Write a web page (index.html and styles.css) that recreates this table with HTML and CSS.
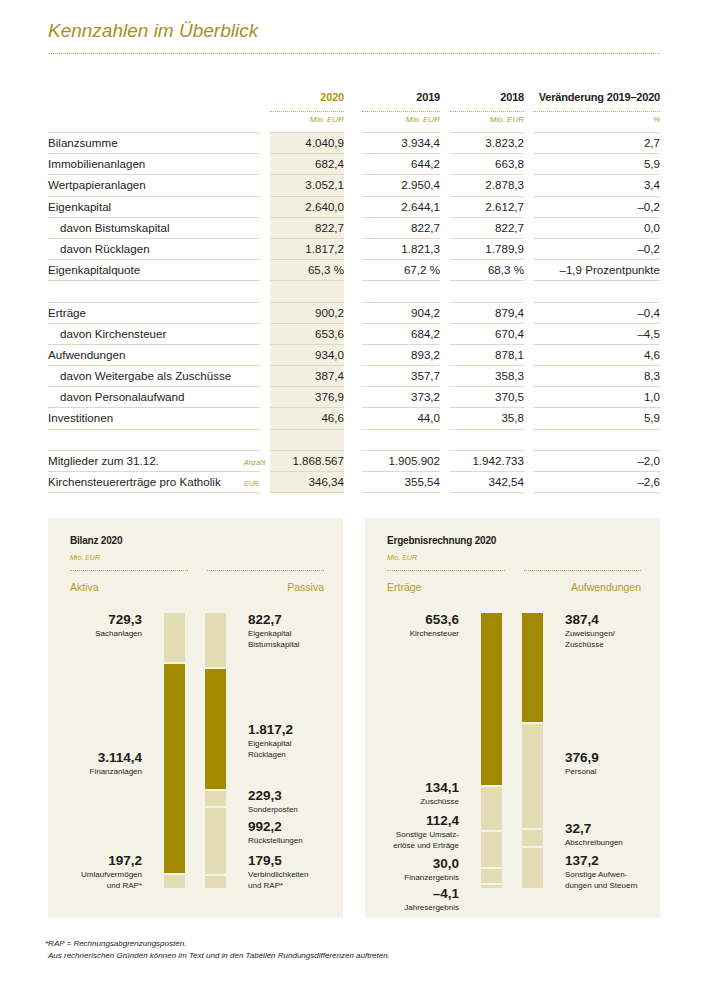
FILE: index.html
```html
<!DOCTYPE html>
<html lang="de">
<head>
<meta charset="utf-8">
<title>Kennzahlen im Überblick</title>
<link rel="stylesheet" href="styles.css">
</head>
<body>
<div class="page">
  <h1 class="title">Kennzahlen im Überblick</h1>

  <div class="table">
    <div class="row head">
      <div class="c lab"></div>
      <div class="c y20 gold">2020</div>
      <div class="c y19">2019</div>
      <div class="c y18">2018</div>
      <div class="c chg">Veränderung 2019–2020</div>
    </div>
    <div class="row units">
      <div class="c lab"></div>
      <div class="c y20">Mio. EUR</div>
      <div class="c y19">Mio. EUR</div>
      <div class="c y18">Mio. EUR</div>
      <div class="c chg">%</div>
    </div>

    <div class="row body"><div class="c lab">Bilanzsumme</div><div class="c y20">4.040,9</div><div class="c y19">3.934,4</div><div class="c y18">3.823,2</div><div class="c chg">2,7</div></div>
    <div class="row body"><div class="c lab">Immobilienanlagen</div><div class="c y20">682,4</div><div class="c y19">644,2</div><div class="c y18">663,8</div><div class="c chg">5,9</div></div>
    <div class="row body"><div class="c lab">Wertpapieranlagen</div><div class="c y20">3.052,1</div><div class="c y19">2.950,4</div><div class="c y18">2.878,3</div><div class="c chg">3,4</div></div>
    <div class="row body"><div class="c lab">Eigenkapital</div><div class="c y20">2.640,0</div><div class="c y19">2.644,1</div><div class="c y18">2.612,7</div><div class="c chg">–0,2</div></div>
    <div class="row body"><div class="c lab sub">davon Bistumskapital</div><div class="c y20">822,7</div><div class="c y19">822,7</div><div class="c y18">822,7</div><div class="c chg">0,0</div></div>
    <div class="row body"><div class="c lab sub">davon Rücklagen</div><div class="c y20">1.817,2</div><div class="c y19">1.821,3</div><div class="c y18">1.789,9</div><div class="c chg">–0,2</div></div>
    <div class="row body"><div class="c lab">Eigenkapitalquote</div><div class="c y20">65,3 %</div><div class="c y19">67,2 %</div><div class="c y18">68,3 %</div><div class="c chg">–1,9 Prozentpunkte</div></div>
    <div class="row body"><div class="c lab"></div><div class="c y20"></div><div class="c y19"></div><div class="c y18"></div><div class="c chg"></div></div>
    <div class="row body"><div class="c lab">Erträge</div><div class="c y20">900,2</div><div class="c y19">904,2</div><div class="c y18">879,4</div><div class="c chg">–0,4</div></div>
    <div class="row body"><div class="c lab sub">davon Kirchensteuer</div><div class="c y20">653,6</div><div class="c y19">684,2</div><div class="c y18">670,4</div><div class="c chg">–4,5</div></div>
    <div class="row body"><div class="c lab">Aufwendungen</div><div class="c y20">934,0</div><div class="c y19">893,2</div><div class="c y18">878,1</div><div class="c chg">4,6</div></div>
    <div class="row body"><div class="c lab sub">davon Weitergabe als Zuschüsse</div><div class="c y20">387,4</div><div class="c y19">357,7</div><div class="c y18">358,3</div><div class="c chg">8,3</div></div>
    <div class="row body"><div class="c lab sub">davon Personalaufwand</div><div class="c y20">376,9</div><div class="c y19">373,2</div><div class="c y18">370,5</div><div class="c chg">1,0</div></div>
    <div class="row body"><div class="c lab">Investitionen</div><div class="c y20">46,6</div><div class="c y19">44,0</div><div class="c y18">35,8</div><div class="c chg">5,9</div></div>
    <div class="row body"><div class="c lab"></div><div class="c y20"></div><div class="c y19"></div><div class="c y18"></div><div class="c chg"></div></div>
    <div class="row body"><div class="c lab"><span class="ltext">Mitglieder zum 31.12.</span><span class="lunit">Anzahl</span></div><div class="c y20">1.868.567</div><div class="c y19">1.905.902</div><div class="c y18">1.942.733</div><div class="c chg">–2,0</div></div>
    <div class="row body"><div class="c lab"><span class="ltext">Kirchensteuererträge pro Katholik</span><span class="lunit">EUR</span></div><div class="c y20">346,34</div><div class="c y19">355,54</div><div class="c y18">342,54</div><div class="c chg">–2,6</div></div>
  </div>

  <div class="charts">
    <div class="panel">
      <div class="ptitle">Bilanz 2020</div>
      <div class="punit">Mio. EUR</div>
      <div class="pdots"><span></span><span></span></div>
      <div class="psides"><span>Aktiva</span><span>Passiva</span></div>
      <div class="chart">
        <div class="lab-left">
          <div class="ann" style="top:0px"><b>729,3</b><span>Sachanlagen</span></div>
          <div class="ann" style="top:138px"><b>3.114,4</b><span>Finanzanlagen</span></div>
          <div class="ann" style="top:241px"><b>197,2</b><span>Umlaufvermögen<br>und RAP*</span></div>
        </div>
        <div class="bar">
          <div class="seg l" style="height:49px"></div>
          <div class="seg d" style="height:209px"></div>
          <div class="seg l" style="height:13px"></div>
        </div>
        <div class="bar">
          <div class="seg l" style="height:54px"></div>
          <div class="seg d" style="height:120px"></div>
          <div class="seg l" style="height:15px"></div>
          <div class="seg l" style="height:66px"></div>
          <div class="seg l" style="height:12px"></div>
        </div>
        <div class="lab-right">
          <div class="ann" style="top:0px"><b>822,7</b><span>Eigenkapital<br>Bistumskapital</span></div>
          <div class="ann" style="top:110px"><b>1.817,2</b><span>Eigenkapital<br>Rücklagen</span></div>
          <div class="ann" style="top:176px"><b>229,3</b><span>Sonderposten</span></div>
          <div class="ann" style="top:207px"><b>992,2</b><span>Rückstellungen</span></div>
          <div class="ann" style="top:241px"><b>179,5</b><span>Verbindlichkeiten<br>und RAP*</span></div>
        </div>
      </div>
    </div>

    <div class="panel">
      <div class="ptitle">Ergebnisrechnung 2020</div>
      <div class="punit">Mio. EUR</div>
      <div class="pdots"><span></span><span></span></div>
      <div class="psides"><span>Erträge</span><span>Aufwendungen</span></div>
      <div class="chart">
        <div class="lab-left">
          <div class="ann" style="top:0px"><b>653,6</b><span>Kirchensteuer</span></div>
          <div class="ann" style="top:168px"><b>134,1</b><span>Zuschüsse</span></div>
          <div class="ann" style="top:201px"><b>112,4</b><span>Sonstige Umsatz-<br>erlöse und Erträge</span></div>
          <div class="ann" style="top:244px"><b>30,0</b><span>Finanzergebnis</span></div>
          <div class="ann" style="top:274px"><b>–4,1</b><span>Jahresergebnis</span></div>
        </div>
        <div class="bar">
          <div class="seg d" style="height:172px"></div>
          <div class="seg l" style="height:43px"></div>
          <div class="seg l" style="height:35px"></div>
          <div class="seg l" style="height:14px"></div>
          <div class="seg l" style="height:3px"></div>
        </div>
        <div class="bar">
          <div class="seg d" style="height:109px"></div>
          <div class="seg l" style="height:104px"></div>
          <div class="seg l" style="height:16px"></div>
          <div class="seg l" style="height:40px"></div>
        </div>
        <div class="lab-right">
          <div class="ann" style="top:0px"><b>387,4</b><span>Zuweisungen/<br>Zuschüsse</span></div>
          <div class="ann" style="top:138px"><b>376,9</b><span>Personal</span></div>
          <div class="ann" style="top:209px"><b>32,7</b><span>Abschreibungen</span></div>
          <div class="ann" style="top:241px"><b>137,2</b><span>Sonstige Aufwen-<br>dungen und Steuern</span></div>
        </div>
      </div>
    </div>
  </div>

  <div class="notes">
    <p class="n1">*RAP = Rechnungsabgrenzungsposten.</p>
    <p>Aus rechnerischen Gründen können im Text und in den Tabellen Rundungsdifferenzen auftreten.</p>
  </div>
</div>
</body>
</html>
```

FILE: styles.css
```css
* { box-sizing: border-box; }

body {
  margin: 0;
  background: #ffffff;
  font-family: "Liberation Sans", Arial, sans-serif;
  color: #1d1d1b;
}

.page {
  width: 612px;
  margin-left: 48px;
  padding-top: 20px;
}

.title {
  margin: 0;
  font-size: 19px;
  font-style: italic;
  font-weight: normal;
  color: #a3921f;
  line-height: 22px;
  padding-bottom: 11px;
  border-bottom: 1px dotted #bfae55;
}

/* ---------- table ---------- */
.table {
  margin-top: 35px;
  font-size: 11.6px;
}

.row {
  display: flex;
}

.c {
  text-align: right;
  white-space: nowrap;
}
.lab { width: 212px; text-align: left; }
.y20 { width: 74px; margin-left: 10px; }
.y19 { width: 78px; margin-left: 18px; }
.y18 { width: 74px; margin-left: 10px; }
.chg { width: 127px; margin-left: 9px; }

.head .c {
  font-size: 11px;
  font-weight: bold;
  letter-spacing: -0.2px;
  line-height: 16px;
  padding-bottom: 6px;
  border-bottom: 1px dotted #bfae55;
}
.head .lab { border-bottom: none; }
.head .gold { color: #ad961c; }

.units .c {
  font-size: 8px;
  font-style: italic;
  color: #b49d2c;
  line-height: 10px;
  padding-top: 3px;
  padding-bottom: 7px;
  border-bottom: 1px solid #e0dac0;
}

.body .c {
  height: 21.2px;
  line-height: 20.2px;
  border-bottom: 1px solid #e0dac0;
}
.body .y20 { background: #f4f0e1; }
.body .sub { padding-left: 12px; }

.body .lab {
  display: flex;
  align-items: baseline;
}
.ltext { flex: 1; }
.lunit {
  width: 16px;
  font-size: 7px;
  font-style: italic;
  color: #b49d2c;
}

/* ---------- charts ---------- */
.charts {
  display: flex;
  gap: 22px;
  margin-top: 25px;
}

.panel {
  width: 295px;
  background: #f5f2e7;
  padding: 16px 19px 5px 22px;
}

.ptitle {
  font-size: 10px;
  font-weight: bold;
  line-height: 14px;
  letter-spacing: -0.2px;
}

.punit {
  margin-top: 5px;
  font-size: 7px;
  font-style: italic;
  color: #b49d2c;
  line-height: 10px;
}

.pdots {
  display: flex;
  gap: 19px;
  margin-top: 7px;
}
.pdots span {
  flex: 1;
  border-top: 1px dotted #bfae55;
}

.psides {
  display: flex;
  justify-content: space-between;
  margin-top: 9px;
  font-size: 10.5px;
  line-height: 14px;
  color: #b39b2d;
}

.chart {
  display: flex;
  height: 300px;
  margin-top: 19px;
}

.lab-left {
  position: relative;
  width: 72px;
}
.lab-right {
  position: relative;
  flex: 1;
  margin-left: 22px;
}

.bar {
  width: 21px;
  height: 275px;
  margin-left: 22px;
  display: flex;
  flex-direction: column;
  gap: 2px;
}
.bar + .bar { margin-left: 20px; }

.seg.d { background: #a28a00; }
.seg.l { background: #e3ddb6; }

.ann {
  position: absolute;
  left: 0;
  right: 0;
  white-space: nowrap;
}
.lab-left .ann { text-align: right; }

.ann b {
  display: block;
  font-size: 13.5px;
  line-height: 14px;
}
.ann span {
  display: block;
  margin-top: 1px;
  font-size: 8px;
  line-height: 11px;
}

/* ---------- notes ---------- */
.notes {
  margin-top: 20px;
  font-size: 8px;
  font-style: italic;
  line-height: 12px;
}
.notes p { margin: 0; }
.notes .n1 { margin-left: -3px; }
```
